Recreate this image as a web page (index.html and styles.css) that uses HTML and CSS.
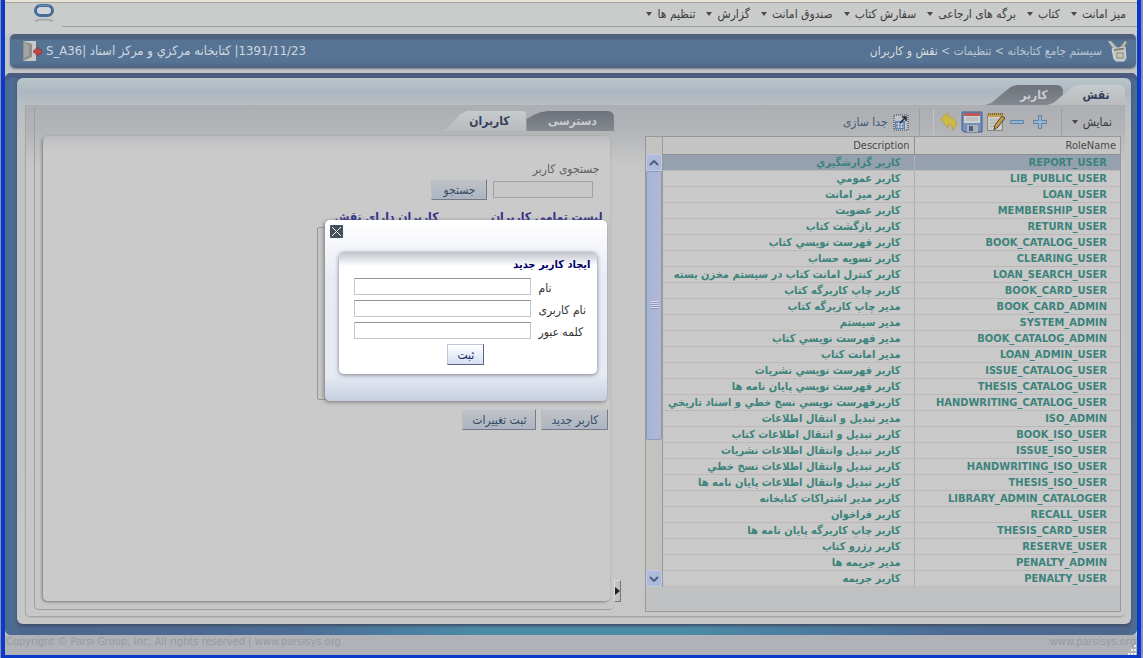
FILE: index.html
```html
<!DOCTYPE html>
<html lang="fa" dir="rtl">
<head>
<meta charset="utf-8">
<title>سیستم جامع کتابخانه</title>
<link rel="stylesheet" href="styles.css">
</head>
<body>
<div class="window">
  <header class="menubar">
    <nav class="menu">
      <button class="menu-item">میز امانت</button>
      <button class="menu-item">کتاب</button>
      <button class="menu-item">برگه های ارجاعی</button>
      <button class="menu-item">سفارش کتاب</button>
      <button class="menu-item">صندوق امانت</button>
      <button class="menu-item">گزارش</button>
      <button class="menu-item">تنظیم ها</button>
    </nav>
    <svg class="logo" width="22" height="20" viewBox="0 0 22 20">
      <rect x="2.500" y="1.500" width="17" height="10" rx="5" fill="#d0d4d8" stroke="#466b99" stroke-width="3"/>
      <path d="M6 1.500h10" stroke="#6f94b8" stroke-width="1"/>
      <path d="M2 17q9-3 18 0" fill="none" stroke="#a4aab0" stroke-width="2"/>
    </svg>
  </header>

  <div class="titlebar">
    <svg class="icon" width="20" height="22" viewBox="0 0 20 22">
      <path d="M0 1l3 0 7 7-2 3-3-2z" fill="#a9b0b0"/>
      <path d="M1 1l7 8" stroke="#d3d4c8"/>
      <path d="M17 1l2 1-5 8-3-1z" fill="#c9b98e"/>
      <path d="M4 9l13-2 1 11-2 3H8l-2-2z" fill="#c3c7c8" stroke="#d6d8d8"/>
      <path d="M6 10l10-1.500" stroke="#857f72" stroke-width="2"/>
      <rect x="9" y="13" width="6" height="5" fill="#c9c6ba" stroke="#8f8877"/>
    </svg>
    <nav class="crumbs"><a href="#">سیستم جامع کتابخانه</a> &gt; <a href="#">تنظیمات</a> &gt; <b>نقش و کاربران</b></nav>
    <div class="session" dir="ltr"><span>S_A36| </span><bdi dir="rtl">كتابخانه مركزي و مركز اسناد</bdi><span> |1391/11/23</span></div>
    <button class="exit" aria-label="خروج">
      <svg width="20" height="22" viewBox="0 0 20 22">
        <path d="M1 1h13v20H1z" fill="#c8cac8"/><path d="M1 1l9 3v13l-9 4z" fill="#8e908e"/><path d="M2 2l5 3v10l-5 3z" fill="#a4a5a2"/>
        <path d="M11 11.500l5-4.500v2.500h3.500v4.500H16V16z" fill="#bb4b4b" stroke="#943c40"/>
      </svg>
    </button>
  </div>

  <main class="frame">
    <div class="sheet">
      <div class="tabs main-tabs" role="tablist">
        <button class="tab active" role="tab">نقش</button>
        <button class="tab" role="tab">کاربر</button>
      </div>
      <div class="workspace">
        <section class="roles">
          <div class="toolbar">
            <button class="tool view">نمایش</button>
            <span class="sep"></span>
            <button class="tool first" aria-label="افزودن"><svg width="16" height="16" viewBox="0 0 16 16"><path d="M6.500 1.500h3v5h5v3h-5v5h-3v-5h-5v-3h5z" fill="#9ab4cd" stroke="#5a84b1"/></svg></button>
            <button class="tool" aria-label="حذف"><svg width="16" height="16" viewBox="0 0 16 16"><path d="M1.500 6.500h13v3h-13z" fill="#9ab4cd" stroke="#5a84b1"/></svg></button>
            <button class="tool" aria-label="ویرایش"><svg width="20" height="20" viewBox="0 0 20 20"><path d="M1.500 2.500h15v16h-15z" fill="#cbcbc6" stroke="#85878a"/><path d="M2 3h15" stroke="#c2a04d" stroke-width="4"/><path d="M2 2h15" stroke="#6d6249" stroke-width="2" stroke-dasharray="1 1"/><path d="M4 8h9M4 11h6M4 14h5" stroke="#a8abaa"/><path d="M16 4l3 2-7 9-4 3 1-5z" fill="#c79a4b" stroke="#54483a"/></svg></button>
            <button class="tool" aria-label="ذخیره"><svg width="22" height="22" viewBox="0 0 22 22"><path d="M1 1h20v20H3l-2-2z" fill="#7590b8" stroke="#3f5f93"/><path d="M3 2h16v10H3z" fill="#cfd1d3"/><path d="M3 2h16v3H3z" fill="#bb5a52"/><path d="M5 7h12M5 9h12" stroke="#a9acb1"/><path d="M6 14h11v7H6z" fill="#aeb2b8"/><path d="M8 15h4v5H8z" fill="#4b5f7c"/></svg></button>
            <button class="tool" aria-label="بازگشت"><svg width="18" height="20" viewBox="0 0 18 20"><path d="M1 7l7-6v4c6 0 9 5 8 9l-4 5c1-4 0-7-4-7v4z" fill="#cdbb45" stroke="#b5a23d"/></svg></button>
            <span class="sep light"></span>
            <span class="sep"></span>
            <button class="tool detach"><svg width="16" height="17" viewBox="0 0 16 17"><rect x="1" y="1" width="14" height="15" fill="#bfc3c9" stroke="#333a44" stroke-width="1" stroke-dasharray="1 1"/><path d="M2 7h10v8H2z" fill="#5e86b4"/><path d="M3 10h8M3 13h8M5.500 8v6M8.500 8v6" stroke="#c4ccd5"/><path d="M7 9l6-6M9 3h4v4" fill="none" stroke="#22262b" stroke-width="1.500"/></svg>جدا سازی</button>
          </div>
          <div class="grid-box">
            <div class="grid">
              <table>
                <colgroup><col class="c-role"><col class="c-desc"></colgroup>
                <thead><tr><th>RoleName</th><th>Description</th></tr></thead>
                <tbody>
                  <tr class="selected"><td>REPORT_USER</td><td>كاربر گزارشگيري</td></tr>
                  <tr><td>LIB_PUBLIC_USER</td><td>كاربر عمومي</td></tr>
                  <tr><td>LOAN_USER</td><td>كاربر ميز امانت</td></tr>
                  <tr><td>MEMBERSHIP_USER</td><td>كاربر عضويت</td></tr>
                  <tr><td>RETURN_USER</td><td>كاربر بازگشت كتاب</td></tr>
                  <tr><td>BOOK_CATALOG_USER</td><td>كاربر فهرست نويسي كتاب</td></tr>
                  <tr><td>CLEARING_USER</td><td>كاربر تسويه حساب</td></tr>
                  <tr><td>LOAN_SEARCH_USER</td><td>كاربر كنترل امانت كتاب در سيستم مخزن بسته</td></tr>
                  <tr><td>BOOK_CARD_USER</td><td>كاربر چاپ كاربرگه كتاب</td></tr>
                  <tr><td>BOOK_CARD_ADMIN</td><td>مدير چاپ كاربرگه كتاب</td></tr>
                  <tr><td>SYSTEM_ADMIN</td><td>مدير سيستم</td></tr>
                  <tr><td>BOOK_CATALOG_ADMIN</td><td>مدير فهرست نويسي كتاب</td></tr>
                  <tr><td>LOAN_ADMIN_USER</td><td>مدير امانت كتاب</td></tr>
                  <tr><td>ISSUE_CATALOG_USER</td><td>كاربر فهرست نويسي نشريات</td></tr>
                  <tr><td>THESIS_CATALOG_USER</td><td>كاربر فهرست نويسي پايان نامه ها</td></tr>
                  <tr><td>HANDWRITING_CATALOG_USER</td><td>كاربرفهرست نويسي نسخ خطي و اسناد تاريخي</td></tr>
                  <tr><td>ISO_ADMIN</td><td>مدير تبديل و انتقال اطلاعات</td></tr>
                  <tr><td>BOOK_ISO_USER</td><td>كاربر تبديل و انتقال اطلاعات كتاب</td></tr>
                  <tr><td>ISSUE_ISO_USER</td><td>كاربر تبديل وانتقال اطلاعات نشريات</td></tr>
                  <tr><td>HANDWRITING_ISO_USER</td><td>كاربر تبديل وانتقال اطلاعات نسخ خطي</td></tr>
                  <tr><td>THESIS_ISO_USER</td><td>كاربر تبديل وانتقال اطلاعات پايان نامه ها</td></tr>
                  <tr><td>LIBRARY_ADMIN_CATALOGER</td><td>كاربر مدير اشتراكات كتابخانه</td></tr>
                  <tr><td>RECALL_USER</td><td>كاربر فراخوان</td></tr>
                  <tr><td>THESIS_CARD_USER</td><td>كاربر چاپ كاربرگه پايان نامه ها</td></tr>
                  <tr><td>RESERVE_USER</td><td>كاربر رزرو كتاب</td></tr>
                  <tr><td>PENALTY_ADMIN</td><td>مدير جريمه ها</td></tr>
                  <tr><td>PENALTY_USER</td><td>كاربر جريمه</td></tr>
                </tbody>
              </table>
              <div class="scrollbar">
                <button class="arrow" aria-label="بالا"><svg width="10" height="6" viewBox="0 0 10 6"><path d="M1 5l4-4 4 4" fill="none" stroke="#4b5f86" stroke-width="2"/></svg></button>
                <div class="thumb"><span></span></div>
                <div class="track"></div>
                <button class="arrow" aria-label="پایین"><svg width="10" height="6" viewBox="0 0 10 6"><path d="M1 1l4 4 4-4" fill="none" stroke="#4b5f86" stroke-width="2"/></svg></button>
              </div>
            </div>
          </div>
        </section>

        <button class="splitter" aria-label="بستن"><svg width="5" height="8" viewBox="0 0 5 8"><path d="M0 0l5 4-5 4z" fill="#222"/></svg></button>

        <section class="users">
          <div class="tabs" role="tablist">
            <button class="tab wide" role="tab">دسترسی</button>
            <button class="tab wide active" role="tab">کاربران</button>
          </div>
          <div class="pane">
            <form class="search">
              <label for="q">جستجوی کاربر</label>
              <div class="row"><input id="q" type="text"><button type="button" class="btn">جستجو</button></div>
            </form>
            <div class="lists">
              <div class="list"><label for="all">لیست تمامی کاربران</label><select id="all" multiple></select></div>
              <div class="list"><label for="has">کاربران دارای نقش</label><select id="has" multiple></select></div>
            </div>
            <div class="actions"><button class="btn">کاربر جدید</button><button class="btn">ثبت تغییرات</button></div>

            <div class="dialog" role="dialog" aria-labelledby="dlg-title">
              <button class="close" aria-label="بستن"><svg width="9" height="9" viewBox="0 0 9 9"><path d="M0 0l9 9M9 0L0 9" stroke="#f4f6f8"/></svg></button>
              <form class="card">
                <h2 id="dlg-title">ایجاد کاربر جدید</h2>
                <div class="field"><label for="n">نام</label><input id="n" type="text"></div>
                <div class="field"><label for="u">نام کاربری</label><input id="u" type="text"></div>
                <div class="field"><label for="p">کلمه عبور</label><input id="p" type="password"></div>
                <button type="button" class="btn bright">ثبت</button>
              </form>
            </div>
          </div>
        </section>
      </div>
    </div>
  </main>

  <footer class="footer">
    <a href="#">www.parsisys.org</a>
    <span dir="ltr">Copyright © Parsi Group, Inc. All rights reserved | www.parsisys.org</span>
    <svg class="grip" width="10" height="10" viewBox="0 0 10 10"><path d="M7 0h2v2h-2zM4 4h2v2h-2zM7 4h2v2h-2zM1 8h2v2h-2zM4 8h2v2h-2zM7 8h2v2h-2z" fill="#eee"/></svg>
  </footer>
</div>
</body>
</html>
```
FILE: styles.css
```css
* { box-sizing: border-box; }
html { background: #8c90bd; }
body {
  margin: 0;
  font: 12px/16px "DejaVu Sans Condensed", "DejaVu Sans", sans-serif;
  color: #444;
}
button, input, select { font: inherit; color: inherit; }
button { background: none; border: 0; padding: 0; }
a { color: inherit; text-decoration: none; }

.window {
  margin: 0 2px 0 1px;
  min-height: 100vh;
  background: #c3c4c5;
  border: solid #0a3bc8;
  border-width: 0 4px 3px;
  display: flex;
  flex-direction: column;
}
.menubar {
  display: flex;
  justify-content: space-between;
  height: 34px;
  background: #cacbcb;
  border-top: 2px solid #e6e2d4;
  box-shadow: inset 0 1px #a5a49f;
}
.menu {
  flex: 1;
  display: flex;
  gap: 11px;
  height: 25px;
  padding-right: 11px;
  border-bottom: 1px solid #9c9ea5;
}
.menu-item { display: flex; align-items: center; gap: 5px; color: #3c3c3c; white-space: nowrap; }
.menu-item::after, .view::after {
  content: "";
  border: 3px solid transparent;
  border-top: 4px solid #494949;
  border-bottom: 0;
}
.logo { margin: 2px 7px 0 28px; }

.titlebar {
  display: flex;
  align-items: center;
  height: 34px;
  margin: 0 1px 5px 5px;
  padding: 0 8px 0 8px;
  border-radius: 5px;
  color: #bac6d1;
  background: linear-gradient(#50607f 0, #50607f 5px, #567394 6px, #567394 27px, #4e6685);
  box-shadow: 0 1px 2px #777b80;
}
.crumbs { flex: 1; margin-right: 6px; }
.crumbs b { font-weight: normal; color: #dedede; }
.session { color: #d0d8df; font-size: 13px; white-space: pre; }
.exit { margin: 0 4px; height: 22px; }
.icon { flex: none; }

.frame {
  padding: 5px 6px 11px 12px;
  border-radius: 6px;
  background: linear-gradient(90deg, #4c668d, #4c6c94 25%, #4b8ba6 42%, #4b8ba6 60%, #4c6c94 83%, #4c668d);
  box-shadow: inset 0 5px #4c5b7f, inset 12px 0 #4d6a91, inset -6px 0 #4d6a91;
}
.sheet {
  padding: 7px 6px 7px 8px;
  border-radius: 6px;
  background: linear-gradient(#b9c6c8, #adb7c2 14px, #b8bec2 26px, #c1c2c4 60px, #c7c7c7);
  box-shadow: 0 2px 3px #414f66;
}
.tabs { display: flex; height: 20px; }
.tab {
  width: 78px;
  height: 20px;
  padding-left: 20px;
  margin-left: -16px;
  position: relative;
  z-index: 1;
  text-align: center;
  font-size: 12px;
  font-weight: bold;
  color: #c9cdd1;
}
.tab::before {
  content: "";
  position: absolute;
  inset: 0;
  z-index: -1;
  background: linear-gradient(#6e737b, #84888f);
  border-radius: 0 6px 0 0;
  clip-path: polygon(0 100%, 8% 90%, 28% 25%, 34% 8%, 42% 0, 100% 0, 100% 100%);
}
.tab.active { color: #33415c; z-index: 2; }
.tab.active::before { background: linear-gradient(#c6cbcd, #b9bbbd); }
.tab.wide { width: 88px; padding-left: 4px; margin-left: 0; }
.tab.wide::before { clip-path: polygon(0 100%, 0 40%, 8% 20%, 16% 6%, 24% 0, 100% 0, 100% 100%); }
.tab.wide.active { width: 86px; padding-left: 12px; }
.tab.wide.active::before { clip-path: polygon(0 100%, 8% 88%, 22% 20%, 30% 0, 100% 0, 100% 100%); border-radius: 0 3px 0 0; }

.workspace {
  display: grid;
  grid-template-columns: 476fr 31px 581fr;
  padding: 3px 4px 4px 8px;
  border: solid #a4a5a8;
  border-width: 0 0 1px 1px;
  border-radius: 0 0 5px 5px;
  background: linear-gradient(#acaeb3, #b2b4b7 24px, #c7c7c7 60px, #c7c7c7);
  box-shadow: 0 1px 1px #b5b5b6;
}
.roles { min-width: 0; }
.toolbar { display: flex; align-items: center; height: 28px; gap: 3px; padding-right: 9px; }
.tool { display: flex; align-items: center; gap: 5px; color: #383c44; }
.tool.first { margin-right: 3px; margin-left: 4px; }
.detach { color: #435a78; }
.sep { width: 1px; height: 26px; margin: 0 7px; background: #9c9ea4; }
.sep.light { margin: 0 3px; background: #c2c4c8; }

.grid-box { border: 1px solid #96989c; background: #bfc1c3; padding-bottom: 24px; font-size: 11px; }
.grid { display: flex; }
table { flex: 1; width: 0; table-layout: fixed; border-collapse: separate; border-spacing: 0; background: #c9c9c9; }
.c-role { width: 45%; }
th { height: 18px; padding: 0 4px; font-weight: normal; text-align: right; color: #494949; background: #c5c5c5; border-bottom: 1px solid #8c8e91; line-height: 17px; }
td {
  height: 16px;
  padding: 0 13px 0 0;
  overflow: hidden;
  white-space: nowrap;
  font-weight: bold;
  line-height: 15px;
  color: #3c837b;
  border-bottom: 1px solid #bdb8b9;
}
th + th, td + td { border-right: 1px solid #b0afb0; }
th + th { border-right-color: #8c8e91; }
.selected td { background: #96a1b0; }
.scrollbar { width: 17px; display: flex; flex-direction: column; padding-top: 17px; background: #c4c2be; border-right: 1px solid #999b9f; }
.arrow { height: 17px; background: #aebadb; border: 1px solid #c4cbdc; border-radius: 2px; line-height: 6px; }
.thumb { flex: 269; display: flex; align-items: center; justify-content: center; background: linear-gradient(90deg, #a8b3d4, #b0b8d3); border: 1px solid #8d9abb; border-radius: 2px; }
.thumb span { width: 8px; height: 8px; background: repeating-linear-gradient(#d1d7e7 0 1px, #909dc0 1px 2px); }
.track { flex: 131; }

.splitter { align-self: end; justify-self: end; width: 7px; height: 22px; margin-bottom: 10px; border: 1px solid #757678; border-left-color: #ddd; border-top-color: #ddd; background: #c1c1c1; display: flex; align-items: center; }

.users {
  min-width: 0;
  margin-bottom: 2px;
  padding-top: 3px;
  border: solid #9d9fa2;
  border-width: 0 0 1px 1px;
  border-radius: 0 0 5px 5px;
}
.pane {
  position: relative;
  height: calc(100% - 33px);
  margin: 5px 4px 0 8px;
  padding: 25px 2px 0 0;
  border-radius: 5px;
  background: linear-gradient(#bcbdc0, #cacaca 14px);
  box-shadow: -1px 1px 3px #77797c;
}
.search { padding-right: 9px; color: #5f5f5f; }
.search .row { display: flex; align-items: center; gap: 6px; padding: 2px 6px 0 0; }
.search input { width: 100px; height: 17px; border: 1px solid #a0a2a4; background: #c8c8c8; }
.btn { min-width: 56px; height: 21px; padding: 0 9px; color: #354c65; background: linear-gradient(#bfc2c6, #adb5c2); border: 1px solid; border-color: #c5c8ce #747b87 #747b87 #b9bdc4; }
.lists { display: flex; gap: 43px; padding: 9px 6px 0 0; }
.list { display: flex; flex-direction: column; gap: 2px; width: 121px; }
.list label { color: #30308a; font-weight: bold; white-space: nowrap; }
.list select { height: 173px; border: 1px solid #969798; background: #c8c8c8; }
.actions { display: flex; gap: 5px; padding-top: 9px; }

.dialog {
  position: absolute;
  z-index: 3;
  top: 84px;
  right: 3px;
  width: 282px;
  padding: 5px 10px 27px 14px;
  border-radius: 5px;
  background: linear-gradient(#fff, #e8ebf5 60px, #e6eaf4 155px, #c6cedf);
  box-shadow: -1px 1px 4px #777;
}
.close { display: flex; align-items: center; justify-content: center; width: 13px; height: 13px; margin: 0 auto 14px -9px; background: #43515f; border-radius: 1px; }
.card {
  display: flex;
  flex-direction: column;
  height: 122px;
  padding: 5px 7px 9px 15px;
  border-radius: 5px;
  background: linear-gradient(#c0c3ce, #fff 14px);
  box-shadow: 0 1px 4px #777c86;
}
.card h2 { margin: 0 0 5px; font-size: 11px; line-height: 16px; color: #000068; }
.field { display: flex; align-items: center; gap: 7px; height: 17px; margin-bottom: 5px; color: #333; }
.field label { width: 52px; padding-top: 3px; text-align: left; line-height: 17px; white-space: nowrap; }
.field input { flex: 1; min-width: 0; height: 17px; border: 1px solid #c0c8cb; border-top-color: #8e9698; background: #fff; }
.bright { align-self: center; min-width: 37px; margin: 0 13px 0 0; color: #142a5c; background: linear-gradient(#fff, #d5dff3); border-color: #bfc8da #5c6579 #5c6579 #bfc8da; }

.footer {
  flex: 1;
  position: relative;
  display: flex;
  justify-content: space-between;
  align-items: flex-start;
  min-height: 20px;
  padding: 0 1px;
  color: #969b9f;
  background: #b0b2b8;
  font-size: 11px;
  line-height: 14px;
}
.grip { position: absolute; right: 0; bottom: 0; }
```
